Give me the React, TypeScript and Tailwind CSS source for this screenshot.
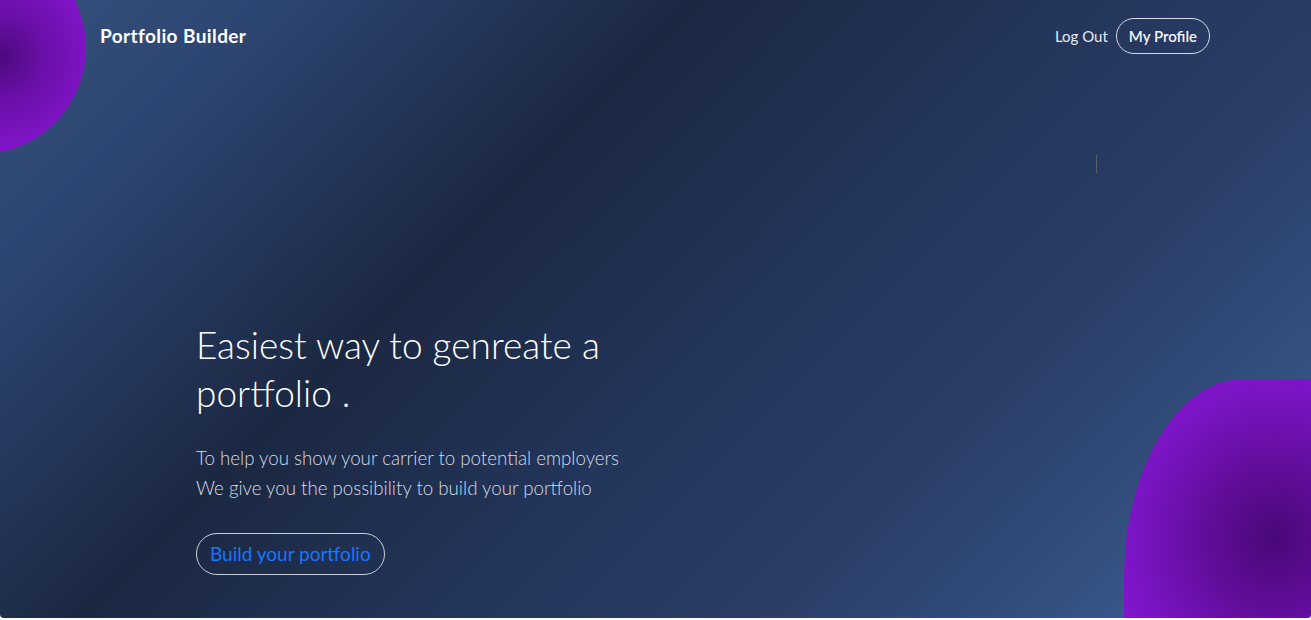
import React from "react";

export default function App() {
  return (
    <div className="w-[1311px] h-[620px] bg-white" style={{ fontFamily: "Lato, 'Open Sans', sans-serif" }}>
      <section className="relative h-[618px] overflow-hidden rounded-b-[4px] bg-[linear-gradient(135deg,#35527d_0%,#2c4370_16%,#1b2842_36%,#23355a_55%,#2b3e68_72%,#33507f_86%,#4467a5_100%)]">
        {/* top-left blob */}
        <div className="absolute left-[-126px] top-[-58px] w-[212px] h-[212px] rounded-full bg-[radial-gradient(circle_at_60%_54%,#4c0a7e_0%,#6a0fa8_25%,#8616cf_60%,#8f19dd_100%)]" />
        {/* bottom-right blob */}
        <div className="absolute left-[1124px] top-[379px] w-[260px] h-[290px] rounded-tl-[120px_200px] rounded-tr-[40px_20px] bg-[radial-gradient(ellipse_at_58%_55%,#4a0878_0%,#5f0d98_30%,#7a14c3_65%,#9019de_100%)]" />
        {/* caret */}
        <div className="absolute left-[1096px] top-[155px] w-px h-[18px] bg-[#5a5f6a]" />

        <nav className="relative flex items-center justify-between pl-[100px] pr-[101px] pt-[18px]">
          <span className="text-[19px] font-bold text-white tracking-[0.4px]">Portfolio Builder</span>
          <div className="flex items-center gap-[8px]">
            <span className="text-[15px] text-[#e6e9ef]">Log Out</span>
            <span className="flex h-[36px] items-center rounded-full border border-[#d8dce4] px-[12px] text-[15px] font-semibold text-[#f2f4f8]">My Profile</span>
          </div>
        </nav>

        <div className="relative pl-[196px] pt-[267px]">
          <h1 className="w-[440px] text-[37px] font-light leading-[48px] text-white">Easiest way to genreate a portfolio .</h1>
          <p className="mt-[26px] text-[18.7px] font-light leading-[30px] text-[#d6dce6]">
            To help you show your carrier to potential employers
            <br />
            We give you the possibility to build your portfolio
          </p>
          <button className="mt-[30px] flex h-[42px] items-center rounded-full border border-[#c9ced8] px-[13px] text-[19px] text-[#1a75ff]">Build your portfolio</button>
        </div>
      </section>
    </div>
  );
}
